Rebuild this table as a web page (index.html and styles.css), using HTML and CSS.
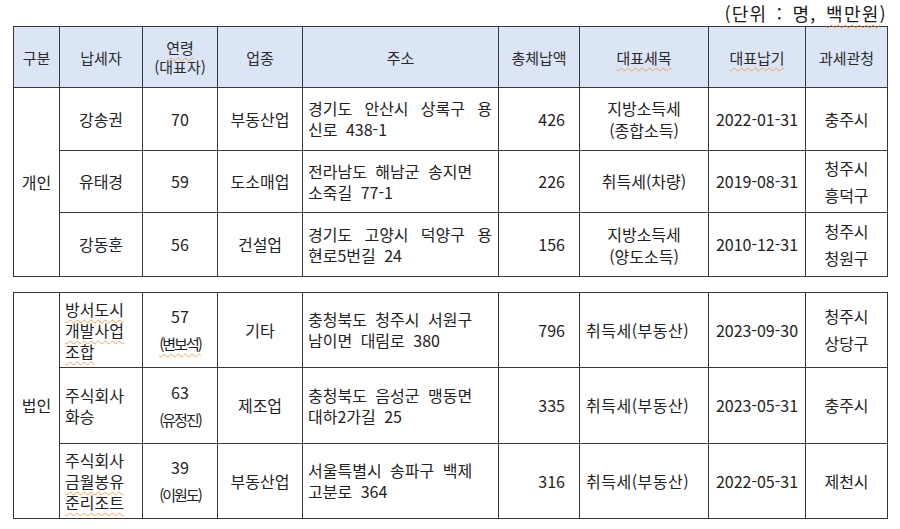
FILE: index.html
```html
<!DOCTYPE html>
<html lang="ko">
<head>
<meta charset="utf-8">
<title>체납자 명단</title>
<link rel="stylesheet" href="styles.css">
</head>
<body>
<div class="page">
  <p class="unit">(단위 : 명, <span class="sp">백만원</span>)</p>

  <table class="tbl t1">
    <colgroup>
      <col class="w1"><col class="w2"><col class="w3"><col class="w4"><col class="w5"><col class="w6"><col class="w7"><col class="w8"><col class="w9">
    </colgroup>
    <thead>
      <tr class="hd">
        <th>구분</th>
        <th>납세자</th>
        <th><span class="hl"><span class="sp">연령</span></span><span class="hl">(대표자)</span></th>
        <th>업종</th>
        <th>주소</th>
        <th>총체납액</th>
        <th><span class="sp">대표세목</span></th>
        <th><span class="sp">대표납기</span></th>
        <th>과세관청</th>
      </tr>
    </thead>
    <tbody>
      <tr class="r1">
        <td class="grp" rowspan="3">개인</td>
        <td>강송권</td>
        <td>70</td>
        <td>부동산업</td>
        <td class="addr"><span class="ln jl">경기도 안산시 상록구 용</span><span class="ln">신로 438-1</span></td>
        <td class="amt">426</td>
        <td class="tax"><span class="ln">지방소득세</span><span class="ln">(종합소득)</span></td>
        <td>2022-01-31</td>
        <td>충주시</td>
      </tr>
      <tr class="r2">
        <td>유태경</td>
        <td>59</td>
        <td>도소매업</td>
        <td class="addr"><span class="ln">전라남도 해남군 송지면</span><span class="ln">소죽길 77-1</span></td>
        <td class="amt">226</td>
        <td>취득세(차량)</td>
        <td>2019-08-31</td>
        <td class="off"><span class="ln">청주시</span><span class="ln">흥덕구</span></td>
      </tr>
      <tr class="r3">
        <td>강동훈</td>
        <td>56</td>
        <td>건설업</td>
        <td class="addr"><span class="ln jl">경기도 고양시 덕양구 용</span><span class="ln">현로5번길 24</span></td>
        <td class="amt">156</td>
        <td class="tax"><span class="ln">지방소득세</span><span class="ln">(양도소득)</span></td>
        <td>2010-12-31</td>
        <td class="off"><span class="ln">청주시</span><span class="ln">청원구</span></td>
      </tr>
    </tbody>
  </table>

  <table class="tbl t2">
    <colgroup>
      <col class="w1"><col class="w2"><col class="w3"><col class="w4"><col class="w5"><col class="w6"><col class="w7"><col class="w8"><col class="w9">
    </colgroup>
    <tbody>
      <tr class="s1">
        <td class="grp" rowspan="3">법인</td>
        <td class="name"><span class="ln"><span class="sp">방서도시</span></span><span class="ln"><span class="sp">개발사업</span></span><span class="ln"><span class="sp">조합</span></span></td>
        <td class="age"><span class="ln">57</span><span class="ln rep"><span class="sp">(변보석)</span></span></td>
        <td>기타</td>
        <td class="addr"><span class="ln">충청북도 청주시 서원구</span><span class="ln">남이면 대림로 380</span></td>
        <td class="amt">796</td>
        <td class="tax2">취득세(부동산)</td>
        <td>2023-09-30</td>
        <td class="off"><span class="ln">청주시</span><span class="ln">상당구</span></td>
      </tr>
      <tr class="s2">
        <td class="name"><span class="ln">주식회사</span><span class="ln">화승</span></td>
        <td class="age"><span class="ln">63</span><span class="ln rep">(유정진)</span></td>
        <td>제조업</td>
        <td class="addr"><span class="ln">충청북도 음성군 맹동면</span><span class="ln">대하2가길 25</span></td>
        <td class="amt">335</td>
        <td class="tax2">취득세(부동산)</td>
        <td>2023-05-31</td>
        <td>충주시</td>
      </tr>
      <tr class="s3">
        <td class="name"><span class="ln">주식회사</span><span class="ln"><span class="sp">금월봉유</span></span><span class="ln"><span class="sp">준리조트</span></span></td>
        <td class="age"><span class="ln">39</span><span class="ln rep">(이원도)</span></td>
        <td>부동산업</td>
        <td class="addr"><span class="ln">서울특별시 송파구 백제</span><span class="ln">고분로 364</span></td>
        <td class="amt">316</td>
        <td class="tax2">취득세(부동산)</td>
        <td>2022-05-31</td>
        <td>제천시</td>
      </tr>
    </tbody>
  </table>
</div>
</body>
</html>
```

FILE: styles.css
```css
html, body {
  margin: 0;
  padding: 0;
  background: #ffffff;
}

body {
  font-family: "Noto Sans CJK KR", "Noto Sans", sans-serif;
  color: #222222;
}

.page {
  width: 874px;
  padding: 0 0 0 13px;
}

.unit {
  margin: 0;
  height: 26px;
  font-size: 18px;
  line-height: 26px;
  text-align: right;
  letter-spacing: 1.3px;
  word-spacing: 3px;
  color: #1a1a1a;
}

.sp {
  text-decoration: underline wavy #f0a050;
  text-decoration-thickness: 1px;
  text-underline-offset: 3px;
}

.tbl {
  width: 874px;
  border-collapse: collapse;
  table-layout: fixed;
}

.t2 {
  margin-top: 15px;
}

.w1 { width: 46px; }
.w2 { width: 83px; }
.w3 { width: 75px; }
.w4 { width: 85px; }
.w5 { width: 196px; }
.w6 { width: 81px; }
.w7 { width: 129px; }
.w8 { width: 97px; }
.w9 { width: 82px; }

.tbl th,
.tbl td {
  border: 1px solid #383838;
  padding: 0 4px;
  text-align: center;
  vertical-align: middle;
  font-size: 16px;
  line-height: 21px;
  font-weight: 400;
}

.tbl th {
  background: #dce5f5;
  font-size: 15px;
  color: #2a2a2a;
}

.hd th { height: 60px; }
.r1 td { height: 62px; }
.r2 td { height: 61px; }
.r3 td { height: 63px; }
.s1 td { height: 74px; }
.s2 td { height: 75px; }
.s3 td { height: 74px; }

.hl {
  display: block;
  line-height: 19px;
}

.ln {
  display: block;
}

.tbl td.grp {
  padding: 0;
}

.tbl td.addr {
  text-align: left;
  padding: 0 6px 0 5px;
  word-spacing: 4px;
}

.tbl td.addr .jl {
  text-align: justify;
  text-align-last: justify;
  word-spacing: 0;
}

.tbl td.amt {
  text-align: right;
  padding-right: 14px;
}

.tbl td.tax {
  line-height: 22px;
}

.tbl td.tax2 {
  text-align: left;
  padding-left: 6px;
  letter-spacing: 0.5px;
}

.off .ln {
  line-height: 27px;
}

.tbl td.name {
  text-align: left;
  padding-left: 5px;
}

.age .ln {
  line-height: 28px;
}

.rep {
  font-size: 15px;
  letter-spacing: -2px;
}
```
